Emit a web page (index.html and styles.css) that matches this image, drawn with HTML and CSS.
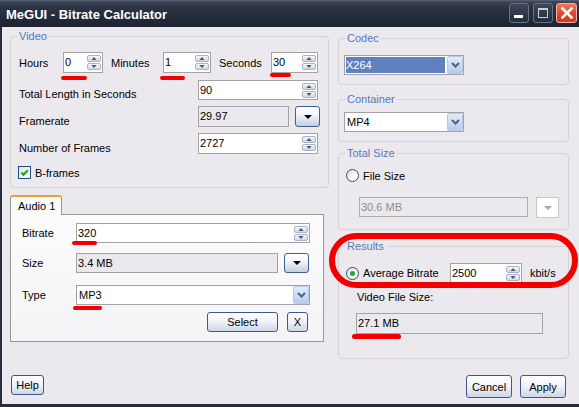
FILE: index.html
```html
<!DOCTYPE html>
<html>
<head>
<meta charset="utf-8">
<title>MeGUI - Bitrate Calculator</title>
<link rel="stylesheet" href="styles.css">
</head>
<body>
<div class="window">
  <div class="titlebar">
    <span class="title">MeGUI - Bitrate Calculator</span>
    <div class="tb-buttons">
      <span class="tb-btn"><svg width="20" height="20" viewBox="0 0 20 20"><rect x="5" y="12" width="9" height="3" fill="#fff"/></svg></span>
      <span class="tb-btn"><svg width="20" height="20" viewBox="0 0 20 20"><rect x="5.5" y="5.5" width="9" height="9" fill="none" stroke="#c9ced8" stroke-width="1"/><rect x="5" y="5" width="10" height="2" fill="#c9ced8"/></svg></span>
      <span class="tb-btn tb-close"><svg width="20" height="20" viewBox="0 0 20 20"><path d="M5.5 5.5 L14.5 14.5 M14.5 5.5 L5.5 14.5" stroke="#fff" stroke-width="2.6" stroke-linecap="square"/></svg></span>
    </div>
  </div>

  <div class="client">
    <div class="main">
      <div class="col-left">
        <fieldset class="group video">
          <legend>Video</legend>
          <div class="row row-time">
            <span class="lbl lbl-hours">Hours</span>
            <div class="spin w-hours"><span class="val">0</span><span class="spinbtns"><span class="sb"><svg width="7" height="4" viewBox="0 0 7 4"><path d="M0 4L3.5 0L7 4Z"/></svg></span><span class="sb"><svg width="7" height="4" viewBox="0 0 7 4"><path d="M0 0L3.5 4L7 0Z"/></svg></span></span></div>
            <span class="lbl lbl-minutes">Minutes</span>
            <div class="spin w-minutes"><span class="val">1</span><span class="spinbtns"><span class="sb"><svg width="7" height="4" viewBox="0 0 7 4"><path d="M0 4L3.5 0L7 4Z"/></svg></span><span class="sb"><svg width="7" height="4" viewBox="0 0 7 4"><path d="M0 0L3.5 4L7 0Z"/></svg></span></span></div>
            <span class="lbl lbl-seconds">Seconds</span>
            <div class="spin w-seconds"><span class="val">30</span><span class="spinbtns"><span class="sb"><svg width="7" height="4" viewBox="0 0 7 4"><path d="M0 4L3.5 0L7 4Z"/></svg></span><span class="sb"><svg width="7" height="4" viewBox="0 0 7 4"><path d="M0 0L3.5 4L7 0Z"/></svg></span></span></div>
          </div>
          <div class="row row-field row-total">
            <span class="lbl lbl-wide">Total Length in Seconds</span>
            <div class="spin w-field h20"><span class="val">90</span><span class="spinbtns"><span class="sb"><svg width="7" height="4" viewBox="0 0 7 4"><path d="M0 4L3.5 0L7 4Z"/></svg></span><span class="sb"><svg width="7" height="4" viewBox="0 0 7 4"><path d="M0 0L3.5 4L7 0Z"/></svg></span></span></div>
          </div>
          <div class="row row-field row-rate">
            <span class="lbl lbl-wide">Framerate</span>
            <div class="rbox w-rate"><span class="val">29.97</span></div>
            <span class="ddbtn"><svg width="8" height="4" viewBox="0 0 8 4"><path d="M0 0L8 0L4 4Z" fill="#000"/></svg></span>
          </div>
          <div class="row row-field row-frames">
            <span class="lbl lbl-wide">Number of Frames</span>
            <div class="spin w-field"><span class="val">2727</span><span class="spinbtns"><span class="sb"><svg width="7" height="4" viewBox="0 0 7 4"><path d="M0 4L3.5 0L7 4Z"/></svg></span><span class="sb"><svg width="7" height="4" viewBox="0 0 7 4"><path d="M0 0L3.5 4L7 0Z"/></svg></span></span></div>
          </div>
          <div class="row row-check">
            <span class="checkbox"><svg width="11" height="11" viewBox="0 0 11 11"><path d="M2.5 5.5 L4.5 7.8 L8.8 3.2" fill="none" stroke="#21a121" stroke-width="2"/></svg></span>
            <span class="check-lbl">B-frames</span>
          </div>
        </fieldset>

        <div class="tabs">
          <div class="tabstrip"><span class="tab">Audio 1</span></div>
          <div class="tabpage">
            <div class="arow arow-bitrate">
              <span class="alabel">Bitrate</span>
              <div class="spin w-audio h20"><span class="val">320</span><span class="spinbtns"><span class="sb"><svg width="7" height="4" viewBox="0 0 7 4"><path d="M0 4L3.5 0L7 4Z"/></svg></span><span class="sb"><svg width="7" height="4" viewBox="0 0 7 4"><path d="M0 0L3.5 4L7 0Z"/></svg></span></span></div>
            </div>
            <div class="arow arow-size">
              <span class="alabel">Size</span>
              <div class="rbox w-asize h20"><span class="val">3.4 MB</span></div>
              <span class="ddbtn dd-size"><svg width="8" height="4" viewBox="0 0 8 4"><path d="M0 0L8 0L4 4Z" fill="#000"/></svg></span>
            </div>
            <div class="arow arow-type">
              <span class="alabel">Type</span>
              <div class="combo w-audio"><span class="cval">MP3</span><span class="carrow"><svg width="9" height="6" viewBox="0 0 9 6"><path d="M1 1L4.5 4.5L8 1" fill="none" stroke="#4d6185" stroke-width="2"/></svg></span></div>
            </div>
            <div class="arow arow-buttons">
              <span class="btn btn-select">Select</span>
              <span class="btn btn-x">X</span>
            </div>
          </div>
        </div>
      </div>

      <div class="col-right">
        <fieldset class="group rgroup codec">
          <legend>Codec</legend>
          <div class="combo w-combo"><span class="cval sel">X264</span><span class="carrow"><svg width="9" height="6" viewBox="0 0 9 6"><path d="M1 1L4.5 4.5L8 1" fill="none" stroke="#4d6185" stroke-width="2"/></svg></span></div>
        </fieldset>
        <fieldset class="group rgroup container">
          <legend>Container</legend>
          <div class="combo w-combo"><span class="cval">MP4</span><span class="carrow"><svg width="9" height="6" viewBox="0 0 9 6"><path d="M1 1L4.5 4.5L8 1" fill="none" stroke="#4d6185" stroke-width="2"/></svg></span></div>
        </fieldset>
        <fieldset class="group rgroup totalsize">
          <legend>Total Size</legend>
          <div class="radio-row">
            <span class="radio"></span>
            <span class="radio-lbl">File Size</span>
          </div>
          <div class="disabled-row">
            <div class="rbox dis w-fsize"><span class="val">30.6 MB</span></div>
            <span class="ddbtn-dis"><svg width="8" height="4" viewBox="0 0 8 4"><path d="M0 0L8 0L4 4Z" fill="#a7a7a7"/></svg></span>
          </div>
        </fieldset>
        <fieldset class="group rgroup results">
          <legend>Results</legend>
          <div class="radio-row res-row">
            <span class="radio checked"><span class="dot"></span></span>
            <span class="radio-lbl avg-lbl">Average Bitrate</span>
            <div class="spin w-avg h20"><span class="val">2500</span><span class="spinbtns"><span class="sb"><svg width="7" height="4" viewBox="0 0 7 4"><path d="M0 4L3.5 0L7 4Z"/></svg></span><span class="sb"><svg width="7" height="4" viewBox="0 0 7 4"><path d="M0 0L3.5 4L7 0Z"/></svg></span></span></div>
            <span class="unit">kbit/s</span>
          </div>
          <div class="vfs-lbl">Video File Size:</div>
          <div class="rbox w-vfs"><span class="val">27.1 MB</span></div>
        </fieldset>
      </div>
    </div>

    <div class="footer">
      <span class="btn btn-help">Help</span>
      <div class="footer-right">
        <span class="btn btn-dlg">Cancel</span>
        <span class="btn btn-dlg">Apply</span>
      </div>
    </div>
  </div>

  <div class="marks">
    <span class="mark m-hours"></span>
    <span class="mark m-minutes"></span>
    <span class="mark m-seconds"></span>
    <span class="mark m-bitrate"></span>
    <span class="mark m-type"></span>
    <span class="mark m-vfs"></span>
    <span class="ring"></span>
  </div>
</div>
</body>
</html>
```

FILE: styles.css
```css
html, body {
  margin: 0;
  padding: 0;
}
body {
  width: 579px;
  height: 407px;
  overflow: hidden;
  font-family: "Liberation Sans", Arial, sans-serif;
  font-size: 11px;
  color: #000;
  background: #1f2636;
}
.window {
  position: relative;
  width: 579px;
  height: 407px;
  display: flex;
  flex-direction: column;
}

/* title bar */
.titlebar {
  height: 27px;
  flex: none;
  display: flex;
  align-items: center;
  justify-content: space-between;
  background: linear-gradient(#5a6477 0, #3a4354 2px, #2b3344 8px, #232a39 18px, #1d2331 27px);
}
.title {
  padding-left: 6px;
  padding-top: 2px;
  color: #fff;
  font-size: 13px;
  font-weight: bold;
  letter-spacing: 0;
}
.tb-buttons {
  display: flex;
  gap: 4px;
  padding-right: 2px;
  padding-bottom: 1px;
}
.tb-buttons .tb-btn:last-child {
  margin-left: -1px;
}
.tb-btn {
  width: 20px;
  height: 20px;
  box-sizing: border-box;
  border: 1px solid #687287;
  border-radius: 3px;
  background: linear-gradient(#3e4759, #262d3c);
  display: flex;
  align-items: center;
  justify-content: center;
  overflow: hidden;
}
.tb-btn svg {
  flex: none;
}
.tb-close {
  width: 21px;
  border-color: #f2b3a3;
  background: linear-gradient(#f07a5c, #e0452b 55%, #d2391f);
}

/* client area */
.client {
  flex: 1;
  background: #ece9ee;
  border-left: 2px solid #252c3b;
  border-bottom: 3px solid #252c3b;
  padding: 3px 0 0 8px;
  display: flex;
  flex-direction: column;
}
.main {
  display: grid;
  grid-template-columns: 319px 231px;
  column-gap: 9px;
  align-items: start;
}
.col-left, .col-right {
  display: flex;
  flex-direction: column;
}
.col-right {
  margin-top: 2px;
}

/* group boxes */
.group {
  margin: 0;
  border: 1px solid #d3d1d8;
  border-radius: 4px;
  min-width: 0;
}
.group legend {
  padding: 0 2px;
  line-height: 13px;
  height: 13px;
  color: #5677bb;
}
.video {
  padding: 9px 8px 8px 8px;
}
.video legend {
  margin-left: -2px;
}
.row {
  display: flex;
}
.row-time {
  align-items: center;
  height: 21px;
  margin-bottom: 7px;
}
.lbl-hours { width: 44px; }
.lbl-minutes { width: 52px; margin-left: 8px; }
.lbl-seconds { width: 52px; margin-left: 8px; }
.row-field {
  align-items: flex-end;
}
.lbl-wide {
  width: 179px;
  line-height: 13px;
  margin-bottom: -1px;
}
.row-total { height: 20px; margin-bottom: 6px; }
.row-rate { height: 21px; margin-bottom: 6px; }
.row-frames { height: 21px; margin-bottom: 12px; }
.row-check {
  height: 13px;
  align-items: center;
}

/* inputs */
.spin, .rbox, .combo {
  box-sizing: border-box;
  height: 21px;
  border: 1px solid #a3a3a7;
  background: #fff;
  display: flex;
  align-items: center;
}
.h20 { height: 20px; }
.val {
  flex: 1;
  padding-left: 1px;
  line-height: 13px;
  white-space: nowrap;
}
.spinbtns {
  display: flex;
  flex-direction: column;
  gap: 1px;
  margin-right: 1px;
  flex: none;
}
.sb {
  width: 14px;
  height: 7px;
  box-sizing: border-box;
  border: 1px solid #a7b3c8;
  border-radius: 2px;
  background: linear-gradient(#f4f6fb, #cfd8e8);
  display: flex;
  align-items: center;
  justify-content: center;
}
.sb svg {
  width: 6px;
  height: 3px;
  fill: #4b5a75;
}
.w-hours { width: 40px; }
.w-minutes { width: 48px; }
.w-seconds { width: 47px; }
.w-field { width: 120px; }
.w-rate { width: 91px; }
.rbox {
  background: #ebe9ed;
}
.ddbtn {
  box-sizing: border-box;
  width: 25px;
  height: 21px;
  margin-left: 6px;
  border: 1px solid #3f5f90;
  border-radius: 3px;
  background: linear-gradient(#ffffff 0, #f3f5f9 40%, #c3cfe2 100%);
  display: flex;
  align-items: center;
  justify-content: center;
}

/* checkbox */
.checkbox {
  box-sizing: border-box;
  width: 13px;
  height: 13px;
  border: 1px solid #1d5281;
  background: linear-gradient(135deg, #e3e3de, #ffffff);
  display: flex;
  align-items: center;
  justify-content: center;
  margin-left: -1px;
}
.check-lbl {
  margin-left: 4px;
}

/* tabs */
.tabs {
  margin-top: 7px;
  width: 314px;
}
.tabstrip {
  display: flex;
  height: 19px;
}
.tab {
  position: relative;
  box-sizing: border-box;
  width: 52px;
  height: 20px;
  padding: 2px 0 0 7px;
  border: 1px solid #919b9c;
  border-top: 2px solid #eba13a;
  border-bottom: none;
  border-radius: 3px 3px 0 0;
  background: #fbfbfc;
  line-height: 14px;
}
.tabpage {
  box-sizing: border-box;
  height: 128px;
  border: 1px solid #919b9c;
  background: linear-gradient(#fcfcfd, #f4f4f7);
  padding: 8px 13px 9px 11px;
  display: flex;
  flex-direction: column;
}
.arow {
  display: flex;
  align-items: center;
  height: 20px;
}
.alabel {
  width: 54px;
}
.arow-bitrate { margin-bottom: 10px; }
.arow-size { margin-bottom: 12px; }
.arow-type { margin-bottom: 7px; }
.arow-buttons {
  justify-content: flex-end;
  padding-right: 2px;
}
.w-audio { width: 234px; height: 20px; }
.w-asize { width: 202px; }
.dd-size { height: 20px; }

/* combo */
.combo .cval {
  flex: 1;
  align-self: stretch;
  margin: 1px 2px 1px 1px;
  padding-left: 1px;
  display: flex;
  align-items: center;
}
.combo .sel {
  background: #5f81bf;
  color: #fff;
  margin-left: 1px;
  padding-left: 0;
}
.carrow {
  box-sizing: border-box;
  width: 16px;
  align-self: stretch;
  border: 1px solid #b9c8e4;
  border-radius: 2px;
  background: linear-gradient(#e4ecf9, #b9cbe9);
  display: flex;
  align-items: center;
  justify-content: center;
}
.w-combo { width: 120px; height: 20px; }

/* buttons */
.btn {
  box-sizing: border-box;
  height: 20px;
  border: 1px solid #3a5a8c;
  border-radius: 3px;
  background: linear-gradient(#ffffff 0, #f2f4f8 45%, #cdd6e6 100%);
  display: flex;
  align-items: center;
  justify-content: center;
}
.btn-select { width: 71px; }
.btn-x { width: 21px; margin-left: 9px; }

/* right column groups */
.rgroup {
  padding: 0 5px;
}
.rgroup legend {
  margin-left: 1px;
}
.codec { padding-top: 10px; padding-bottom: 9px; }
.container { margin-top: 8px; padding-top: 6px; padding-bottom: 9px; }
.totalsize { margin-top: 5px; padding-top: 9px; padding-bottom: 11px; }
.results { margin-top: 10px; padding-top: 10px; padding-bottom: 24px; }

.radio-row {
  display: flex;
  align-items: center;
  height: 13px;
  padding-left: 2px;
}
.radio {
  box-sizing: border-box;
  width: 13px;
  height: 13px;
  border: 1px solid #2a4d7c;
  border-radius: 50%;
  background: linear-gradient(135deg, #dcdcd6, #ffffff 70%);
  display: flex;
  align-items: center;
  justify-content: center;
  flex: none;
}
.dot {
  width: 5px;
  height: 5px;
  border-radius: 50%;
  background: #2aa52a;
}
.radio-lbl {
  margin-left: 4px;
}
.disabled-row {
  display: flex;
  margin-top: 15px;
  padding-left: 15px;
}
.rbox.dis {
  height: 20px;
  color: #8d8d8d;
  border-color: #aeaeae;
}
.w-fsize { width: 169px; }
.ddbtn-dis {
  box-sizing: border-box;
  width: 23px;
  height: 21px;
  margin-left: 8px;
  border: 1px solid #c9c8c2;
  background: #fff;
  display: flex;
  align-items: center;
  justify-content: center;
}
.res-row {
  height: 20px;
}
.avg-lbl {
  width: 87px;
}
.w-avg { width: 72px; }
.unit { margin-left: 8px; }
.vfs-lbl {
  margin-top: 8px;
  margin-left: 13px;
  line-height: 13px;
}
.w-vfs {
  width: 187px;
  margin-top: 9px;
  margin-left: 12px;
}

/* footer */
.footer {
  margin-top: 16px;
  display: flex;
  justify-content: space-between;
  align-items: flex-start;
  padding-right: 13px;
}
.btn-help {
  width: 33px;
  margin-left: 1px;
}
.footer-right {
  display: flex;
  gap: 8px;
}
.btn-dlg {
  width: 46px;
  height: 23px;
}

/* red annotation marks drawn over the screenshot */
.marks {
  position: absolute;
  left: 0;
  top: 0;
  width: 579px;
  height: 407px;
  pointer-events: none;
}
.mark {
  position: absolute;
  height: 4px;
  border-radius: 3px;
  background: #f20000;
}
.m-hours { left: 61px; top: 76px; width: 26px; }
.m-minutes { left: 160px; top: 76px; width: 25px; }
.m-seconds { left: 270px; top: 73px; width: 21px; }
.m-bitrate { left: 72px; top: 241px; width: 25px; }
.m-type { left: 73px; top: 306px; width: 29px; }
.m-vfs { left: 352px; top: 334px; width: 49px; height: 5px; }
.ring {
  position: absolute;
  left: 329px;
  top: 233px;
  width: 249px;
  height: 55px;
  box-sizing: border-box;
  border: 6px solid #f20000;
  border-radius: 28px;
}
```
